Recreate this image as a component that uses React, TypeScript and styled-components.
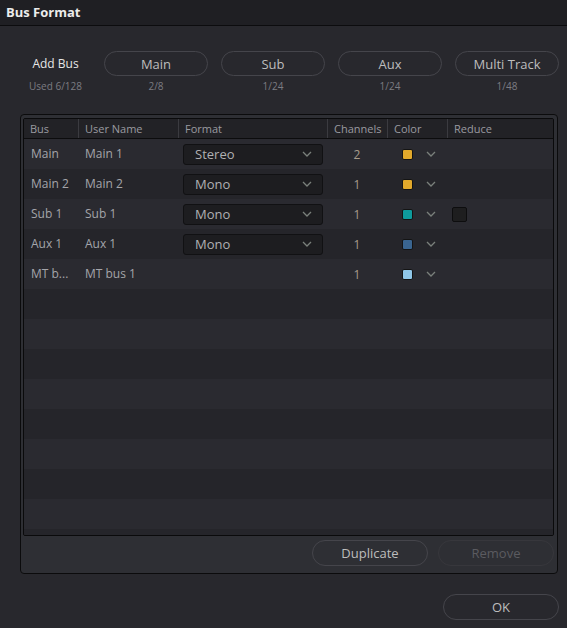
import styled, { createGlobalStyle } from "styled-components";

const GlobalStyle = createGlobalStyle`
  html, body {
    margin: 0;
    padding: 0;
    background: #28282d;
  }
  * {
    box-sizing: border-box;
  }
`;

type Bus = {
  bus: string;
  name: string;
  format?: string;
  channels: number;
  color: string;
  reduce?: boolean;
};

const buses: Bus[] = [
  { bus: "Main", name: "Main 1", format: "Stereo", channels: 2, color: "#e2a92b" },
  { bus: "Main 2", name: "Main 2", format: "Mono", channels: 1, color: "#e2a92b" },
  { bus: "Sub 1", name: "Sub 1", format: "Mono", channels: 1, color: "#0e9b9c", reduce: true },
  { bus: "Aux 1", name: "Aux 1", format: "Mono", channels: 1, color: "#3a6590" },
  { bus: "MT b...", name: "MT bus 1", channels: 1, color: "#8fc7e8" },
];

const busKinds = [
  { label: "Main", count: "2/8" },
  { label: "Sub", count: "1/24" },
  { label: "Aux", count: "1/24" },
  { label: "Multi Track", count: "1/48" },
];

const headers = ["Bus", "User Name", "Format", "Channels", "Color", "Reduce"];
const TOTAL_ROWS = 14;

const Chevron = () => (
  <svg width="10" height="6" viewBox="0 0 10 6">
    <polyline points="1,1 5,5 9,1" fill="none" stroke="#7a807b" strokeWidth="1.3" />
  </svg>
);

const App = (): JSX.Element => {
  const empty = TOTAL_ROWS - buses.length;
  return (
    <>
      <GlobalStyle />
      <Window>
        <TitleBar>Bus Format</TitleBar>

        <AddBusRow>
          <KindColumn>
            <AddLabel>Add Bus</AddLabel>
            <Count>Used 6/128</Count>
          </KindColumn>
          {busKinds.map((k) => (
            <KindColumn key={k.label}>
              <PillButton>{k.label}</PillButton>
              <Count>{k.count}</Count>
            </KindColumn>
          ))}
        </AddBusRow>

        <Panel>
          <Table>
            <HeaderRow>
              {headers.map((h) => (
                <HeaderCell key={h}>{h}</HeaderCell>
              ))}
            </HeaderRow>
            {buses.map((b, i) => (
              <Row key={b.name} $odd={i % 2 === 1}>
                <TextCell>{b.bus}</TextCell>
                <TextCell>{b.name}</TextCell>
                <Cell>
                  {b.format && (
                    <Dropdown>
                      <span>{b.format}</span>
                      <Chevron />
                    </Dropdown>
                  )}
                </Cell>
                <ChannelCell>{b.channels}</ChannelCell>
                <ColorCell>
                  <Swatch $color={b.color} />
                  <Chevron />
                </ColorCell>
                <Cell>{b.reduce && <Checkbox />}</Cell>
              </Row>
            ))}
            {Array.from({ length: empty }).map((_, i) => (
              <Row key={"e" + i} $odd={(buses.length + i) % 2 === 1} />
            ))}
          </Table>
          <PanelActions>
            <PillButton $wide>Duplicate</PillButton>
            <PillButton $wide $disabled>
              Remove
            </PillButton>
          </PanelActions>
        </Panel>

        <Footer>
          <PillButton $wide>OK</PillButton>
        </Footer>
      </Window>
    </>
  );
};

export default App;

const Window = styled.div`
  width: 567px;
  height: 628px;
  display: flex;
  flex-direction: column;
  background: #28282d;
  font-family: "Open Sans", "Noto Sans", sans-serif;
  overflow: hidden;
`;

const TitleBar = styled.div`
  height: 26px;
  line-height: 25px;
  padding-left: 6px;
  background: #1f1f23;
  border-bottom: 1px solid #0c0c0e;
  color: #ececec;
  font-size: 13px;
  font-weight: 700;
`;

const AddBusRow = styled.div`
  display: flex;
  gap: 13px;
  margin-top: 25px;
  padding-left: 20px;
`;

const KindColumn = styled.div`
  display: flex;
  flex-direction: column;
  align-items: center;
  gap: 3px;
  min-width: 71px;
`;

const AddLabel = styled.div`
  height: 25px;
  line-height: 25px;
  color: #e6e6e6;
  font-size: 12px;
`;

const Count = styled.div`
  height: 14px;
  line-height: 14px;
  color: #7c7c82;
  font-size: 10px;
`;

const PillButton = styled.div<{ $wide?: boolean; $disabled?: boolean }>`
  width: ${(p) => (p.$wide ? "116px" : "104px")};
  height: ${(p) => (p.$wide ? "26px" : "25px")};
  display: flex;
  align-items: center;
  justify-content: center;
  border: 1px solid ${(p) => (p.$disabled ? "#37373c" : "#45454b")};
  border-radius: 13px;
  color: ${(p) => (p.$disabled ? "#5b5b60" : "#bdbdbd")};
  font-size: 13px;
`;

const Panel = styled.div`
  margin: 21px 0 0 20px;
  width: 538px;
  height: 460px;
  padding: 3px 3px 0 2px;
  background: #2e2f34;
  border: 1px solid #0b0b0c;
  border-radius: 4px;
  display: flex;
  flex-direction: column;
`;

const Table = styled.div`
  height: 418px;
  border: 1px solid #0a0a0b;
  border-radius: 2px;
  background: #25252a;
  overflow: hidden;
`;

const columns = "54px 100px 149px 60px 60px 1fr";

const HeaderRow = styled.div`
  display: grid;
  grid-template-columns: ${columns};
  height: 20px;
  background: #222226;
  border-bottom: 1px solid #0c0c0d;
`;

const HeaderCell = styled.div`
  padding-left: 6px;
  line-height: 19px;
  color: #9a9aa0;
  font-size: 11px;
  & + & {
    border-left: 1px solid #3b3b40;
  }
`;

const Row = styled.div<{ $odd?: boolean }>`
  display: grid;
  grid-template-columns: ${columns};
  height: 30px;
  background: ${(p) => (p.$odd ? "#25252a" : "#2a2a30")};
`;

const Cell = styled.div`
  display: flex;
  align-items: center;
  padding-left: 5px;
  min-width: 0;
`;

const TextCell = styled(Cell)`
  display: block;
  padding-left: 7px;
  line-height: 30px;
  color: #a4a5aa;
  font-size: 12px;
  white-space: nowrap;
  overflow: hidden;
`;

const ChannelCell = styled(Cell)`
  justify-content: center;
  padding-left: 0;
  color: #a89c8c;
  font-size: 12px;
`;

const ColorCell = styled(Cell)`
  padding-left: 15px;
  gap: 13px;
`;

const Dropdown = styled.div`
  width: 140px;
  height: 21px;
  display: flex;
  align-items: center;
  justify-content: space-between;
  padding: 0 10px 0 11px;
  background: #1d1d20;
  border: 1px solid #111113;
  border-radius: 3px;
  color: #b0b0b2;
  font-size: 13px;
`;

const Swatch = styled.div<{ $color: string }>`
  width: 11px;
  height: 11px;
  background: ${(p) => p.$color};
  border: 1px solid #141414;
  border-radius: 2px;
`;

const Checkbox = styled.div`
  width: 15px;
  height: 15px;
  background: #1e1e1f;
  border: 1px solid #0d0d0e;
  border-radius: 2px;
`;

const PanelActions = styled.div`
  display: flex;
  justify-content: flex-end;
  gap: 10px;
  margin-top: 4px;
`;

const Footer = styled.div`
  display: flex;
  justify-content: flex-end;
  margin-top: 20px;
  padding-right: 8px;
`;
